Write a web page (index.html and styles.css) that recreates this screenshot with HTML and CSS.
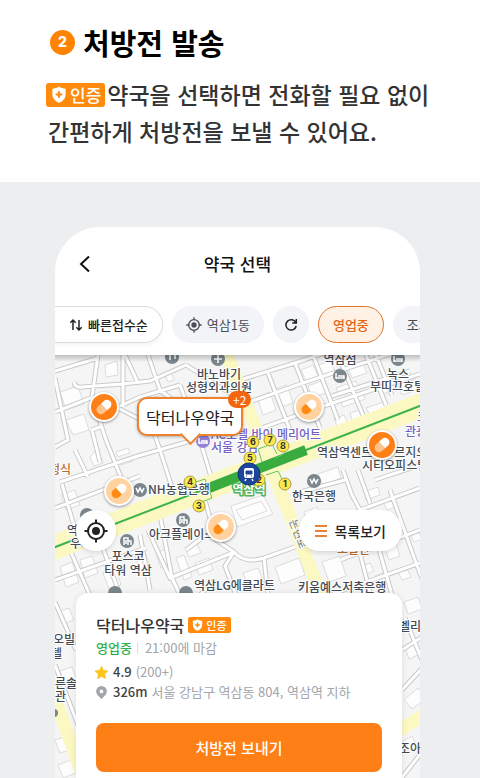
FILE: index.html
```html
<!DOCTYPE html>
<html lang="ko">
<head>
    <meta charset="UTF-8">
    <meta name="viewport" content="width=device-width, initial-scale=1.0">
    <title>처방전 발송</title>
    <link rel="stylesheet" href="styles.css">
</head>
<body>
    <!-- Shared symbols -->
    <svg class="symbols" aria-hidden="true">
        <symbol id="shield" viewBox="0 0 16 18">
            <path fill="#fff" d="M8 0.500C10 2 12.500 2.600 15 2.800V9c0 4.200-3 7.300-7 8.700C4 16.300 1 13.200 1 9V2.800C3.500 2.600 6 2 8 0.500z"/>
            <path d="M8 5.500v7M4.500 9h7" stroke="#ff8a0c" stroke-width="2.200"/>
        </symbol>
        <symbol id="pill" viewBox="0 0 20 20">
            <g transform="rotate(-42 10 10)">
                <path class="pill-a" d="M10 5.500H6a4.500 4.500 0 0 0 0 9h4z"/>
                <path class="pill-b" d="M10 5.500h4a4.500 4.500 0 0 1 0 9h-4z"/>
            </g>
        </symbol>
        <symbol id="target" viewBox="0 0 24 24">
            <circle cx="12" cy="12" r="8" fill="none" stroke="currentColor" stroke-width="2"/>
            <circle cx="12" cy="12" r="4" fill="currentColor"/>
            <path d="M12 0.500V5M12 19v4.500M0.500 12H5M19 12h4.500" stroke="currentColor" stroke-width="2"/>
        </symbol>
    </svg>

    <section class="intro">
        <h1><span class="step">2</span>처방전 발송</h1>
        <p class="description">
            <span class="line"><span class="verified large"><svg><use href="#shield"/></svg>인증</span>약국을 선택하면 전화할 필요 없이</span>
            <span class="line second">간편하게 처방전을 보낼 수 있어요.</span>
        </p>
    </section>

    <main class="stage">
        <div class="phone">
            <header class="top-bar">
                <button class="back" aria-label="뒤로">
                    <svg viewBox="0 0 12 18"><path d="M10 1.500L2 9l8 7.500"/></svg>
                </button>
                <h2>약국 선택</h2>
            </header>

            <div class="filters">
                <button class="chip sort">
                    <svg class="sort-icon" viewBox="0 0 14 14"><path d="M4 12V2M1.300 4.700L4 2l2.700 2.700M10 2v10M7.300 9.300L10 12l2.700-2.700"/></svg>
                    빠른접수순
                </button>
                <button class="chip">
                    <svg class="target-icon"><use href="#target"/></svg>
                    역삼1동
                </button>
                <button class="chip reload" aria-label="새로고침">
                    <svg viewBox="0 0 14 14"><path d="M11.800 4.600A5.200 5.200 0 1 0 12.200 8M12.300 1v4H8.300"/></svg>
                </button>
                <button class="chip active">영업중</button>
                <button class="chip">조제가능</button>
            </div>

            <div class="map">
                <svg class="map-tiles" viewBox="55 355 365 423" preserveAspectRatio="xMinYMin slice">
                    <defs>
                        <path id="streets" d="M98 355L92 397L106 440L122 480M55 371L98 358M123 355V407M74 382Q75 388 82 387L122 384L150 381L186 365M148 355L160 390L176 402M55 412L93 397M55 378L68 440L55 447M118 407L140 397L180 385M118 408L145 422M92 430L102 426M92 430L100 462M75 450L88 477M60 482L138 456L215 434M150 422L160 450L176 500M180 385L200 440L212 480M186 365L240 400M125 355L137 381
                        M240 380L295 363L420 320M244 404L300 384L420 344M295 363L320 428M338 355L365 420M313 355L338 420M366 355L386 405M392 395L376 355M332 396L410 371M268 373L290 430M250 432L318 408L420 374
                        M55 508L140 476M62 484L78 540M140 535L150 590M148 530L170 578L232 553M55 580L146 548M70 550L92 600M100 540L120 595M160 515L172 578M172 578L180 595M205 500L216 540L234 552Q244 564 264 558L306 543M234 552L225 566L236 595M264 558L268 595M215 580L200 595M206 535L186 550
                        M360 510L352 495L343 470M345 480L300 492M360 510L420 488M360 510L334 532M358 470L370 503M375 480L420 465M355 534L372 600M390 490L415 560L430 600M375 535L392 595M330 595L420 563M340 560L420 530
                        M55 602L76 650M55 665L80 730M402 650L422 637M402 690L425 665M405 618L422 660M400 780L425 748"/>
                        <path id="buildings" d="M165 374l6-2 3 8-6 2zM90 457l7-8 6 14-9 3zM116 452l12-4 2 5-12 4zM119 460l12-4 2 5-12 4zM60 392l18-6 6 18-18 6zM105 365l12-4 1 14-12 2zM144 400l18-5 4 12-18 4zM66 420l18-6 5 16-16 5zM257 397l13-5 6 18-13 5zM272 390l15-5 6 18-14 5zM301 370l12-5 6 13-12 5zM318 365l12-4 6 12-12 4zM308 386l16-6 4 12-16 6zM336 388l20-7 3 8-20 7zM340 399l22-8 3 8-22 8zM347 366l15-5 5 12-15 5zM375 382l15-5 5 13-15 5zM398 385l17-6 4 10-17 6zM334 419l10-4 4 9-10 4zM350 413l9-3 4 9-10 4zM366 408l18-6 3 7-17 6z
                        M61 495l14-5 5 15-14 5zM60 567l12-5 7 20-13 5zM80 560l12-4 6 17-13 5zM103 573l13-5 5 17-12 4zM135 556l10-4 5 14-10 4zM185 548l12-4 4 9-12 4zM176 558l8-3 8 22-8 3zM195 563l14-5 4 12-14 5zM243 573l15-5 6 15-15 5zM275 567l24-9 6 17-24 9zM156 553l10-4 5 15-10 4zM231 506l32-11 10 19-36 13zM236 510l25-9 6 10-25 9zM304 512l13-5 4 11-13 5zM318 474l20-7 3 11-18 7zM364 492l14-5 2 8-14 5zM382 500l9-3 5 10-9 3zM322 562l18-6 6 20-17 6zM362 566l8-3 4 8-8 3zM375 576l8-3 3 8-8 3zM410 534l8-3 4 8-8 3zM398 572l9-3 4 8-9 3zM385 548l11-4 4 12-11 4z
                        M57 612l12-4 5 12-12 4zM60 671l12-4 5 13-12 4zM55 740l16-5 5 13-16 5zM58 765l13-5 5 13-13 5zM405 648l11-5 4 11-11 5zM404 700l14-12 8 11-14 10zM403 741l9-5 5 10-9 5zM404 602l14-5 4 12-14 5z"/>
                    </defs>
                    <rect class="ground" x="55" y="355" width="365" height="423"/>
                    <use class="building" href="#buildings"/>
                    <use class="street-edge" href="#streets"/>
                    <use class="street" href="#streets"/>
                    <path class="avenue minor" d="M227 355L321 595M50 685L82 774M395 733L425 714"/>
                    <path class="avenue" d="M45 551L430 402"/>
                    <path class="subway" d="M45 551L430 402"/>
                    <path class="platform" d="M209 488L306 450"/>
                    <path class="exit-line" d="M190 484l15-5 7 19-13 5M250 462l5 8M262 462l-4-13 14-5 5 10M275 458l9-4M266 475l12-4 4 8"/>

                    <!-- Points of interest -->
                    <g class="poi">
                        <circle cx="172" cy="357" r="7"/><circle cx="218" cy="359" r="7"/>
                        <circle cx="340" cy="376" r="7"/><circle cx="398" cy="359" r="7"/>
                        <circle cx="140" cy="490" r="7"/><circle cx="314" cy="481" r="7"/>
                        <circle cx="127" cy="541" r="7"/><circle cx="183" cy="520" r="7"/>
                        <circle cx="87" cy="515" r="7"/><circle cx="115" cy="593" r="7"/>
                        <circle cx="186" cy="593" r="7"/><circle cx="54" cy="713" r="4"/>
                        <circle class="purple" cx="203" cy="441" r="7"/>
                    </g>
                    <g class="poi-icon">
                        <path d="M170 360v-6l5-1v6M218 355v8M214 359h8"/>
                        <path d="M336 373v6M336 378h8v1M338 376h6v2M394 356v6M394 361h8v1M396 359h6v2M199 438v6M199 443h8v1M201 441h6v2"/>
                        <path d="M136 488l2 4 2-4 2 4 2-4M310 479l2 4 2-4 2 4 2-4"/>
                        <path d="M124 545v-7h4v7M128 541h3v4M126 540v4M180 524v-7h4v7M184 520h3v4M182 519v4"/>
                    </g>

                    <g class="label">
                        <text class="center" x="219" y="379">바노바기</text>
                        <text class="center" x="219" y="392">성형외과의원</text>
                        <text class="center" x="340" y="364">역삼점</text>
                        <text class="center" x="398" y="379">녹스</text>
                        <text x="370" y="391">부띠끄호텔</text>
                        <text class="purple" x="211" y="439">AC호텔 바이 메리어트</text>
                        <text class="purple" x="211" y="452">서울 강남</text>
                        <text class="purple" x="417" y="422">코</text>
                        <text class="purple" x="405" y="436">관광</text>
                        <text x="317" y="457">역삼역센트럴푸르지오</text>
                        <text x="362" y="470">시티오피스텔</text>
                        <text class="brown" x="49" y="474">정식</text>
                        <text x="148" y="494">NH농협은행</text>
                        <text x="292" y="501">한국은행</text>
                        <text x="67" y="535">역삼</text>
                        <text x="70" y="548">우체국</text>
                        <text x="149" y="539">아크플레이스</text>
                        <text class="center" x="128" y="561">포스코</text>
                        <text class="center" x="128" y="575">타워 역삼</text>
                        <text x="194" y="590">역삼LG에클라트</text>
                        <text x="298" y="592">키움예스저축은행</text>
                        <text class="brown" x="337" y="554">오발탄</text>
                        <text class="road-name" transform="translate(289 521) rotate(69)">논현로</text>
                        <text x="53" y="644">오빌딩</text>
                        <text x="51" y="658">텔</text>
                        <text x="55" y="688">른솔</text>
                        <text x="55" y="701">관</text>
                        <text x="399" y="631">벨리</text>
                        <text x="399" y="753">조아</text>
                        <text class="station center" x="249" y="494">역삼역</text>
                    </g>

                    <!-- Station exits -->
                    <g class="exit">
                        <circle cx="259" cy="480" r="6"/><text x="259" y="483">2</text>
                        <circle cx="253" cy="442" r="6"/><text x="253" y="445">6</text>
                        <circle cx="270" cy="440" r="6"/><text x="270" y="443">7</text>
                        <circle cx="283" cy="446" r="6"/><text x="283" y="449">8</text>
                        <circle cx="250" cy="458" r="6"/><text x="250" y="461">5</text>
                        <circle cx="190" cy="482" r="6"/><text x="190" y="485">4</text>
                        <circle cx="199" cy="506" r="6"/><text x="199" y="509">3</text>
                        <circle cx="285" cy="484" r="6"/><text x="285" y="487">1</text>
                    </g>
                    <g>
                        <circle cx="249" cy="474" r="11" fill="#1d459c" stroke="#12357f"/>
                        <rect x="244" y="468" width="10" height="10" rx="2" fill="#fff"/>
                        <path d="M246 471h6v3h-6zM246 476h1M251 476h1" fill="#1d459c" stroke="#1d459c"/>
                        <path d="M246 479l-1 2M252 479l1 2" stroke="#fff" stroke-width="1.500"/>
                    </g>
                </svg>

                <button class="pin pin-1" aria-label="약국"><svg><use href="#pill"/></svg></button>
                <button class="pin closed pin-2" aria-label="약국"><svg><use href="#pill"/></svg></button>
                <button class="pin pin-3" aria-label="약국"><svg><use href="#pill"/></svg></button>
                <button class="pin closed pin-4" aria-label="약국"><svg><use href="#pill"/></svg></button>
                <button class="pin closed pin-5" aria-label="약국"><svg><use href="#pill"/></svg></button>
                <button class="bubble">닥터나우약국<span class="count">+2</span></button>

                <div class="map-controls">
                    <button class="locate" aria-label="현재 위치"><svg><use href="#target"/></svg></button>
                    <button class="list-view">
                        <svg viewBox="0 0 14 14"><path d="M1 2h12M1 7h12M1 12h12"/></svg>
                        목록보기
                    </button>
                </div>

                <article class="card">
                    <h3>닥터나우약국<span class="verified"><svg><use href="#shield"/></svg>인증</span></h3>
                    <p class="status"><span class="open">영업중</span><span class="hours">21:00에 마감</span></p>
                    <p class="info">
                        <svg viewBox="0 0 16 16"><path fill="#fcc419" stroke="#fcc419" stroke-linejoin="round" d="M8 1.500l2 4.400 4.800.5-3.600 3.200 1 4.800L8 12l-4.200 2.400 1-4.800L1.200 6.400 6 5.900z"/></svg>
                        <strong>4.9</strong> <span>(200+)</span>
                    </p>
                    <p class="info">
                        <svg viewBox="0 0 16 16"><path fill="#a2a5aa" fill-rule="evenodd" d="M8 1a5.700 5.700 0 0 1 5.700 5.700C13.700 10 10.500 12.500 8 15 5.500 12.500 2.300 10 2.300 6.700A5.700 5.700 0 0 1 8 1zm0 3.800a2 2 0 1 0 0 4 2 2 0 0 0 0-4z"/></svg>
                        <strong>326m</strong> <span>서울 강남구 역삼동 804, 역삼역 지하</span>
                    </p>
                    <button class="send">처방전 보내기</button>
                </article>
            </div>
        </div>
    </main>
</body>
</html>
```

FILE: styles.css
```css
:root {
    --orange: #ff7f17;
    --badge: #ff8a0c;
    --text: #333333;
    --muted: #a2a5aa;
    --chip: #f3f4f7;
    --stage: #edeef0;
}

* {
    margin: 0;
    padding: 0;
    box-sizing: border-box;
}

body {
    display: flex;
    flex-direction: column;
    min-height: 100vh;
    font-family: "Noto Sans CJK KR", "Noto Sans", sans-serif;
    color: var(--text);
    background: #fff;
}

button {
    border: none;
    background: none;
    font: inherit;
    color: inherit;
    cursor: pointer;
}

.symbols {
    position: absolute;
    width: 0;
    height: 0;
}

/* Intro */
.intro {
    padding: 22px 24px 32px 46px;
}

h1 {
    display: flex;
    align-items: center;
    gap: 8px;
    padding-left: 4px;
    font-size: 29px;
    line-height: 40px;
    font-weight: 700;
    color: #000;
}

.step {
    display: flex;
    align-items: center;
    justify-content: center;
    width: 25px;
    height: 25px;
    border-radius: 50%;
    background: #ff8200;
    color: #fff;
    font-family: Inter, sans-serif;
    font-size: 14px;
    font-weight: 800;
}

.description {
    margin-top: 14px;
    font-size: 23px;
    line-height: 37px;
    font-weight: 500;
}

.line {
    display: flex;
    align-items: center;
    white-space: nowrap;
}

.second {
    padding-left: 2px;
}

.verified {
    display: inline-flex;
    align-items: center;
    gap: 3px;
    height: 16px;
    padding: 0 4px;
    border-radius: 2px;
    background: var(--badge);
    color: #fff;
    font-size: 11px;
    font-weight: 500;
}

.verified svg {
    width: 11px;
    height: 12px;
}

.verified.large {
    height: 24px;
    margin-right: 2px;
    padding: 0 4px 0 5px;
    border-radius: 3px;
    font-size: 17px;
}

.verified.large svg {
    width: 16px;
    height: 17px;
}

/* Phone */
.stage {
    flex: 1;
    display: flex;
    padding: 45px 60px 0 55px;
    background: var(--stage);
}

.phone {
    flex: 1;
    min-width: 0;
    display: flex;
    flex-direction: column;
    overflow: hidden;
    border-radius: 45px 45px 0 0;
    background: #fff;
}

.top-bar {
    display: grid;
    grid-template-columns: 40px 1fr 40px;
    align-items: center;
    height: 73px;
    padding: 0 10px;
}

.top-bar h2 {
    font-size: 17px;
    font-weight: 500;
    text-align: center;
    color: #111;
}

.back {
    display: flex;
    justify-content: center;
}

.back svg {
    width: 12px;
    height: 18px;
    fill: none;
    stroke: #111;
    stroke-width: 2;
}

.filters {
    position: relative;
    z-index: 1;
    display: flex;
    gap: 9px;
    padding: 6px 0 12px;
    overflow: hidden;
    background: #fff;
}

.chip {
    flex: none;
    display: flex;
    align-items: center;
    gap: 5px;
    height: 37px;
    padding: 0 14px;
    border-radius: 19px;
    background: var(--chip);
    font-size: 13px;
    color: #4a4e57;
}

.chip svg {
    width: 14px;
    height: 14px;
    fill: none;
    stroke: #222;
    stroke-width: 2;
}

.chip .sort-icon {
    stroke-width: 1.5;
}

.chip .target-icon {
    width: 16px;
    height: 16px;
    stroke: none;
}

.chip.sort {
    border: 1px solid #dcdde0;
    border-left: none;
    border-radius: 0 19px 19px 0;
    background: #fff;
    box-shadow: 0 2px 4px rgba(0, 0, 0, 0.05);
    color: #222;
    font-weight: 500;
}

.chip.reload {
    width: 36px;
    padding: 0;
    justify-content: center;
}

.chip.reload svg {
    stroke-width: 1.5;
}

.chip.active {
    border: 1px solid #df752c;
    background: #fff1e3;
    color: #e0661a;
    font-weight: 500;
}

/* Map */
.map {
    position: relative;
    flex: 1;
    display: flex;
    flex-direction: column;
    justify-content: flex-end;
    padding: 155px 18px 0 21px;
    overflow: hidden;
    background: #f5f5f5;
}

.map::before {
    content: "";
    position: absolute;
    z-index: 1;
    inset: 0 0 auto;
    height: 7px;
    background: linear-gradient(rgba(0, 0, 0, 0.22), rgba(0, 0, 0, 0));
}

.map-tiles {
    position: absolute;
    inset: 0;
    width: 100%;
    height: 100%;
}

.ground { fill: #f5f5f5; }
.building { fill: #fdfdfd; stroke: #dcdcdc; stroke-width: 1; }
.street-edge { fill: none; stroke: #c9c9c9; stroke-width: 5; }
.street { fill: none; stroke: #fff; stroke-width: 3; }
.avenue { fill: none; stroke: #fcf8c2; stroke-width: 24; }
.avenue.minor { stroke-width: 13; }
.subway { fill: none; stroke: #3db449; stroke-width: 2; }
.platform { fill: none; stroke: #38ac3e; stroke-width: 10; }
.exit-line { fill: none; stroke: #5fc76a; stroke-width: 1; }

.poi { fill: #7b868d; }
.poi .purple { fill: #9482d8; }
.poi-icon { fill: none; stroke: #fff; stroke-width: 1.5; }

.label {
    font-size: 12px;
    font-weight: 500;
    fill: #444a52;
    stroke: #fff;
    stroke-width: 2px;
    stroke-linejoin: round;
    paint-order: stroke;
}

.label .center { text-anchor: middle; }
.label .purple { fill: #7361c2; }
.label .brown { fill: #b56c2c; }
.label .road-name { fill: #8b8b80; font-size: 11px; }
.label .station { fill: #fff; stroke: #4bb45a; stroke-width: 3px; font-weight: 700; }

.exit circle { fill: #fbe84a; stroke: #a99b45; stroke-width: 1; }
.exit text {
    font-family: Inter, sans-serif;
    font-size: 9px;
    font-weight: 700;
    text-anchor: middle;
    fill: #333;
}

.pin {
    position: absolute;
    display: flex;
    align-items: center;
    justify-content: center;
    width: 30px;
    height: 30px;
    border: 2px solid #fff;
    border-radius: 50%;
    background: var(--orange);
    box-shadow: 0 1px 3px rgba(0, 0, 0, 0.4);
}

.pin svg {
    flex: none;
    width: 20px;
    height: 20px;
}

.pill-a { fill: var(--pill-a, #ffc38e); }
.pill-b { fill: #fff; }

.pin.closed {
    --pill-a: #ff8b14;
    background: #ffd2a0;
}

.pin-1 { left: 34px; top: 37px; }
.pin-2 { left: 239px; top: 37px; }
.pin-3 { left: 312px; top: 75px; }
.pin-4 { left: 49px; top: 121px; }
.pin-5 { left: 151px; top: 157px; }

.bubble {
    position: absolute;
    left: 82px;
    top: 42px;
    height: 39px;
    padding: 0 7px;
    border: 2px solid #f0812a;
    border-radius: 10px;
    background: #fff;
    box-shadow: 0 1px 3px rgba(0, 0, 0, 0.3);
    font-size: 16px;
    color: #222;
}

/* Bubble tail */
.bubble::after {
    content: "";
    position: absolute;
    left: 44px;
    bottom: -8px;
    width: 13px;
    height: 13px;
    border: solid #f0812a;
    border-width: 0 2px 2px 0;
    background: #fff;
    transform: rotate(45deg);
}

.count {
    position: absolute;
    right: -10px;
    top: -8px;
    padding: 0 5px;
    border-radius: 9px;
    background: #f46510;
    color: #fff;
    font-size: 12px;
    line-height: 17px;
}

.map-controls {
    position: relative;
    display: flex;
    justify-content: space-between;
    margin-bottom: 42px;
}

.locate,
.list-view {
    display: flex;
    align-items: center;
    justify-content: center;
    height: 41px;
    border-radius: 21px;
    background: #fff;
    box-shadow: 0 2px 5px rgba(0, 0, 0, 0.12);
}

.locate {
    width: 40px;
    color: #222;
}

.locate svg {
    width: 24px;
    height: 24px;
}

.list-view {
    gap: 6px;
    padding: 0 16px 0 15px;
    font-size: 14px;
    font-weight: 500;
    color: #222;
}

.list-view svg {
    width: 14px;
    height: 14px;
    stroke: #e98234;
    stroke-width: 2;
}

/* Pharmacy card */
.card {
    position: relative;
    padding: 20px 20px 6px;
    border-radius: 12px 12px 0 0;
    background: #fff;
    box-shadow: 0 0 6px rgba(0, 0, 0, 0.1);
}

.card h3 {
    display: flex;
    align-items: center;
    gap: 4px;
    font-size: 16px;
    line-height: 24px;
    font-weight: 500;
}

.status {
    display: flex;
    align-items: center;
    font-size: 13px;
    line-height: 22px;
}

.open {
    color: #2db24a;
    font-weight: 500;
}

.hours {
    margin-left: 5px;
    padding-left: 7px;
    border-left: 1px solid #ddd;
    line-height: 12px;
    color: var(--muted);
}

.info {
    display: flex;
    align-items: center;
    gap: 4px;
    margin-left: -2px;
    font-size: 13px;
    line-height: 20px;
    color: var(--muted);
}

.status + .info {
    margin-top: 3px;
}

.info svg {
    width: 15px;
    height: 15px;
}

.info strong {
    font-weight: 500;
    color: #444;
}

.send {
    width: 100%;
    height: 49px;
    margin-top: 21px;
    border-radius: 8px;
    background: var(--orange);
    color: #fff;
    font-size: 15px;
    font-weight: 500;
}
```
